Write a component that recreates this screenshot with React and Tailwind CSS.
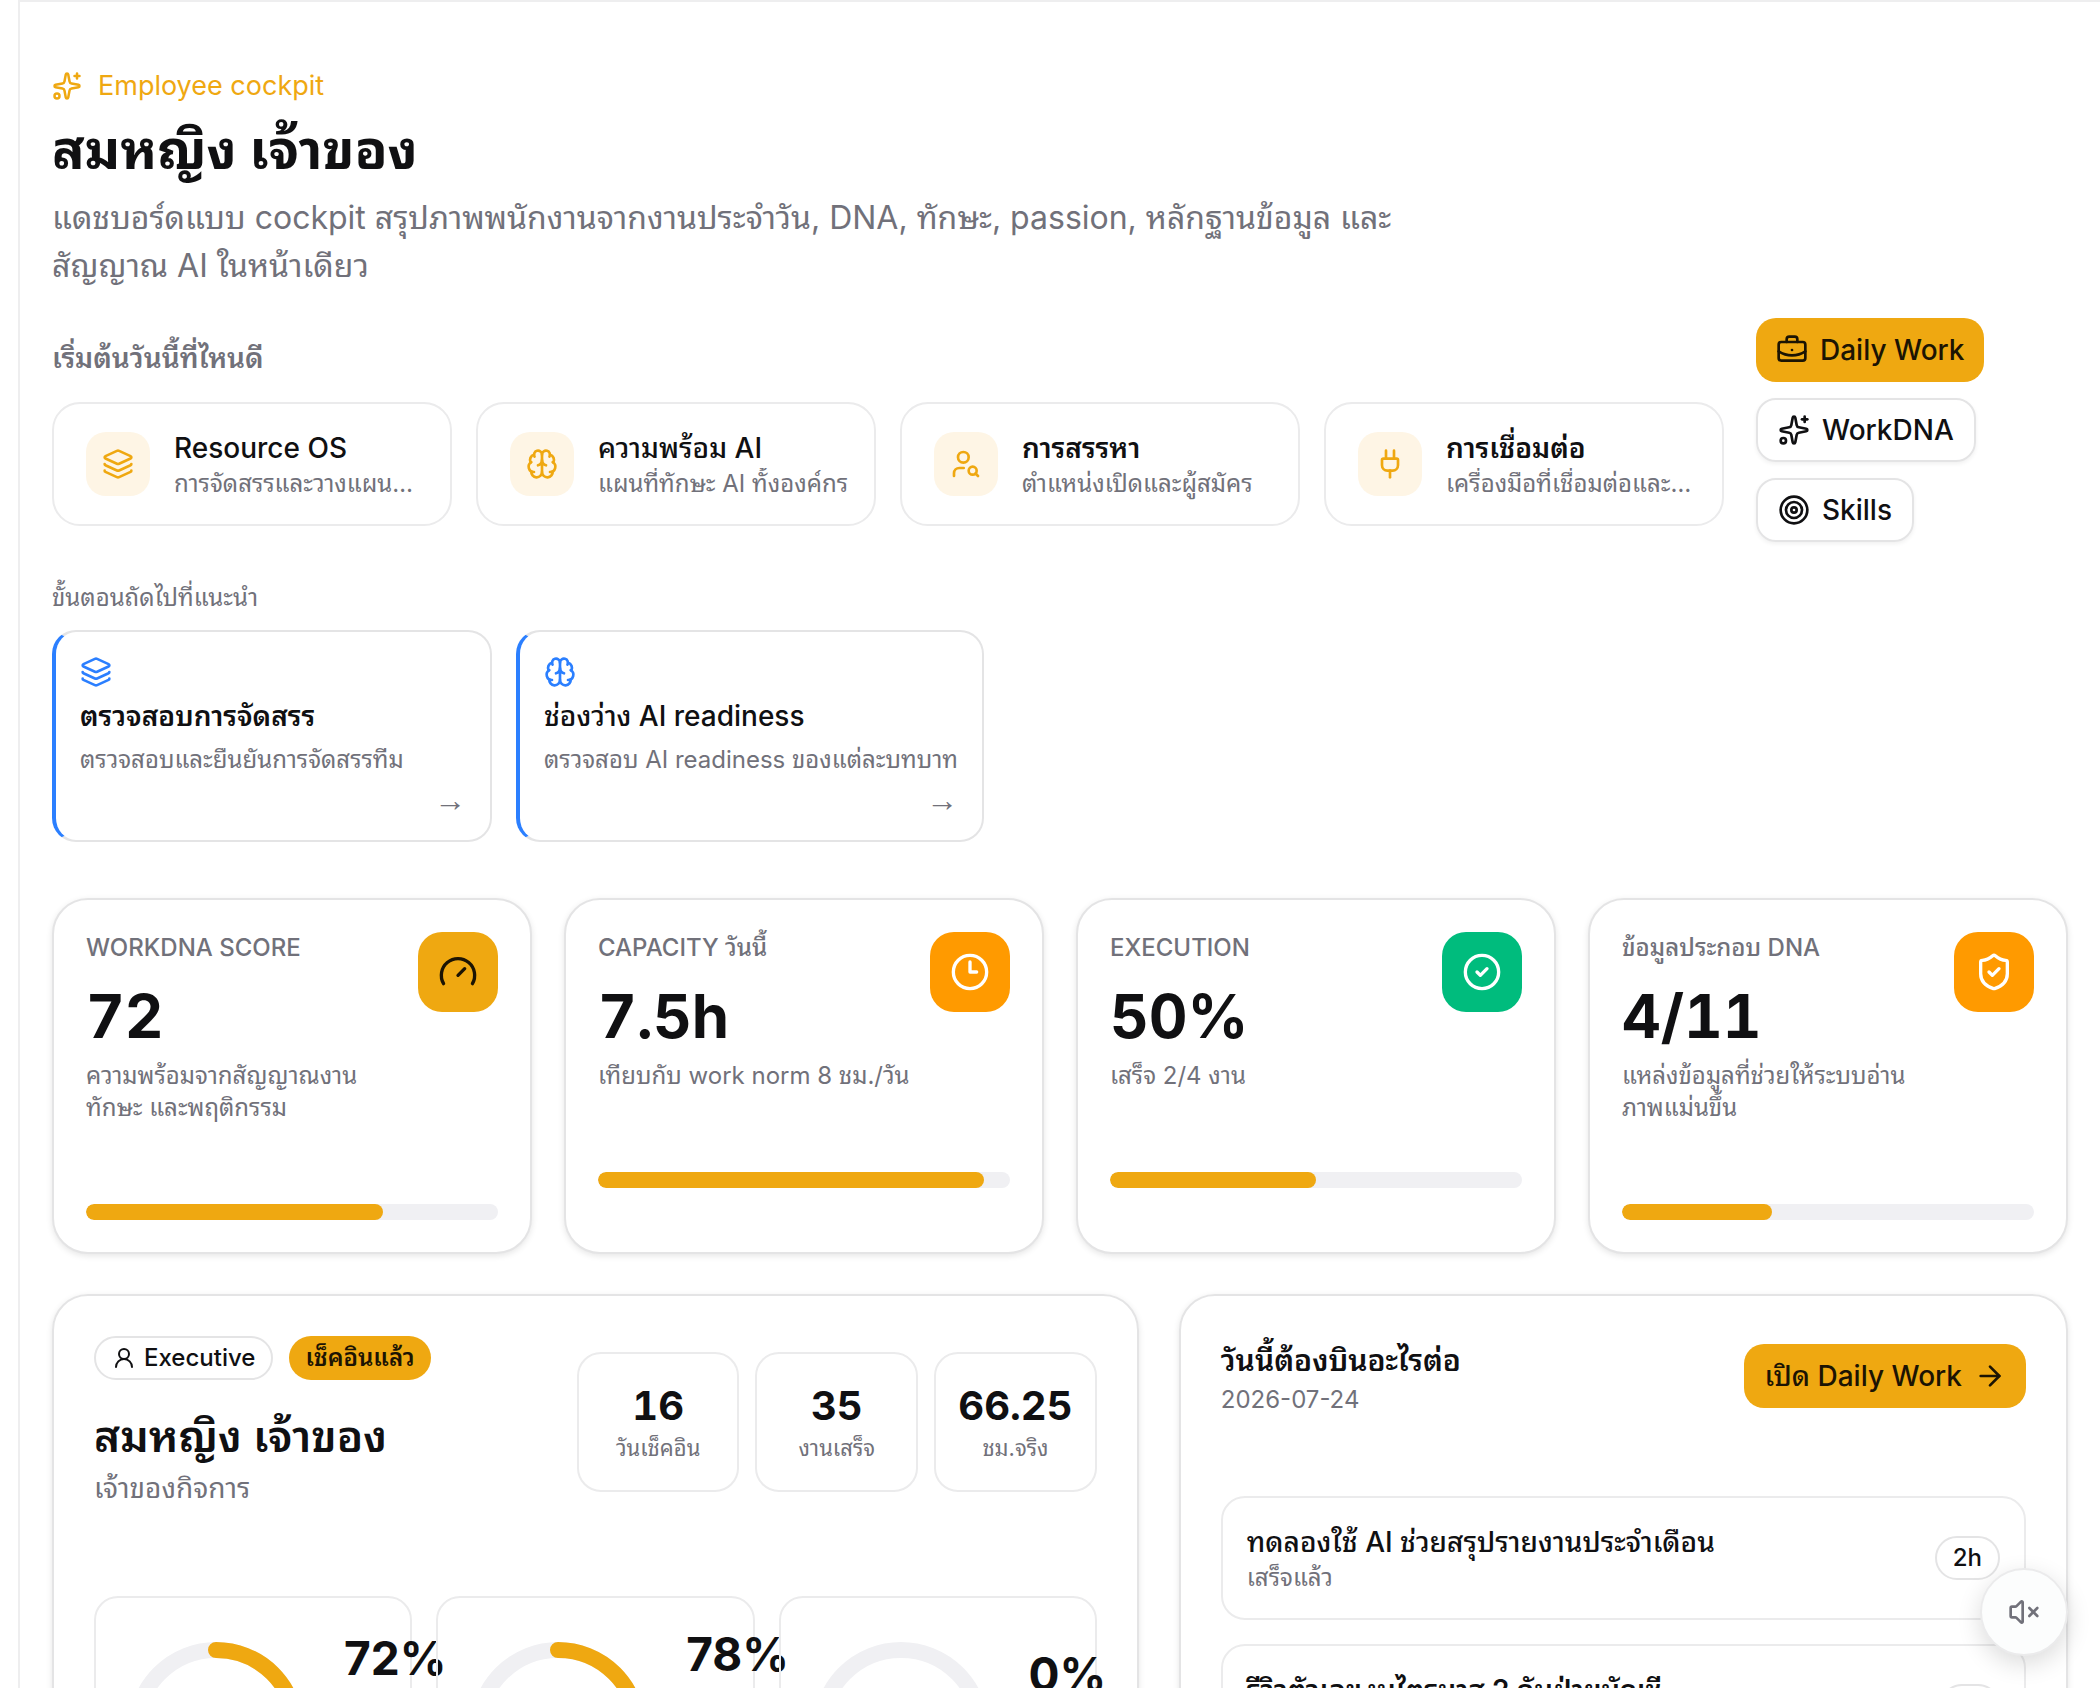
import React from "react";
import {
  ArrowRight, Brain, BriefcaseBusiness, CircleCheck, Clock3, Gauge, Layers, Plug,
  ShieldCheck, Sparkles, Target, UserRound, UserSearch, VolumeX,
} from "lucide-react";

const quickLinks = [
  { icon: Layers, title: "Resource OS", sub: "การจัดสรรและวางแผนกำลังคน" },
  { icon: Brain, title: "ความพร้อม AI", sub: "แผนที่ทักษะ AI ทั้งองค์กร" },
  { icon: UserSearch, title: "การสรรหา", sub: "ตำแหน่งเปิดและผู้สมัคร" },
  { icon: Plug, title: "การเชื่อมต่อ", sub: "เครื่องมือที่เชื่อมต่อและสถานะ" },
];

const nextSteps = [
  { icon: Layers, title: "ตรวจสอบการจัดสรร", sub: "ตรวจสอบและยืนยันการจัดสรรทีม" },
  { icon: Brain, title: "ช่องว่าง AI readiness", sub: "ตรวจสอบ AI readiness ของแต่ละบทบาท" },
];

const kpis = [
  { label: "WORKDNA SCORE", value: "72", lines: ["ความพร้อมจากสัญญาณงาน", "ทักษะ และพฤติกรรม"], pct: 72, icon: Gauge, tone: "bg-[#efa811] text-[#1c1403]" },
  { label: "CAPACITY วันนี้", value: "7.5h", lines: ["เทียบกับ work norm 8 ชม./วัน"], pct: 93.75, icon: Clock3, tone: "bg-[#ff9a00] text-white" },
  { label: "EXECUTION", value: "50%", lines: ["เสร็จ 2/4 งาน"], pct: 50, icon: CircleCheck, tone: "bg-[#00bc7d] text-white" },
  { label: "ข้อมูลประกอบ DNA", value: "4/11", lines: ["แหล่งข้อมูลที่ช่วยให้ระบบอ่าน", "ภาพแม่นขึ้น"], pct: 36.4, icon: ShieldCheck, tone: "bg-[#ff9a00] text-white" },
];

const stats = [
  { value: "16", label: "วันเช็คอิน" },
  { value: "35", label: "งานเสร็จ" },
  { value: "66.25", label: "ชม.จริง" },
];

const rings = [
  { pct: 72, offset: "mt-0" },
  { pct: 78, offset: "-mt-1" },
  { pct: 0, offset: "mt-4" },
];

const tasks = [
  { title: "ทดลองใช้ AI ช่วยสรุปรายงานประจำเดือน", status: "เสร็จแล้ว", hours: "2h" },
  { title: "รีวิวตัวเลขงบไตรมาส 2 กับฝ่ายบัญชี", status: "เสร็จแล้ว", hours: "1h" },
];

const titleWeight = (text) => (/[A-Za-z]/.test(text) ? "font-medium" : "font-semibold");

function Ring({ pct }) {
  const c = 2 * Math.PI * 80;
  return (
    <svg viewBox="0 0 192 192" className="size-48 shrink-0" fill="none" strokeWidth="16">
      <circle cx="96" cy="96" r="80" stroke="#f0f0f3" />
      {pct > 0 && (
        <circle
          cx="96" cy="96" r="80" stroke="#efa811" strokeLinecap="round"
          strokeDasharray={`${(c * pct) / 100} ${c}`} transform="rotate(-90 96 96)"
        />
      )}
    </svg>
  );
}

function KpiCard({ label, value, lines, pct, icon: Icon, tone }) {
  return (
    <div className="rounded-[36px] border-2 border-[#e4e4e5] bg-white p-8 shadow-[0_2px_6px_rgba(0,0,0,0.1)]">
      <div className="flex items-start justify-between gap-6">
        <div className="min-w-0">
          <div className="text-2xl leading-8 font-medium text-[#71717a]">{label}</div>
          <div className="mt-4 text-[60px] leading-[72px] font-bold tabular-nums">{value}</div>
          <div className="mt-2 text-2xl leading-8 text-[#71717a]">
            {lines.map((l) => <div key={l} className="whitespace-nowrap">{l}</div>)}
          </div>
        </div>
        <div className={`flex size-20 shrink-0 items-center justify-center rounded-3xl ${tone}`}>
          <Icon className="size-10" />
        </div>
      </div>
      <div className="mt-20 h-4 overflow-hidden rounded-full bg-[#f0f0f3]">
        <div className="h-full rounded-full bg-[#efa811]" style={{ width: `${pct}%` }} />
      </div>
    </div>
  );
}

export default function App() {
  return (
    <div className="h-screen overflow-hidden bg-white pl-[18px] font-['Inter','Noto_Sans_Thai_Looped',sans-serif] text-[#101012]">
      <main className="min-h-full border-t-2 border-l-2 border-[#eeeeef] pt-16 pr-8 pl-8">
        <header className="flex items-end gap-8">
          <div className="min-w-0 flex-1 pb-4">
            <div className="flex items-center gap-4 text-[27px] leading-10 text-[#efa811]">
              <Sparkles className="size-[30px]" /> Employee cockpit
            </div>
            <h1 className="mt-2 text-[54px] leading-[72px] font-bold">สมหญิง เจ้าของ</h1>
            <p className="mt-2 text-[32px] leading-[48px] text-[#71717a]">
              แดชบอร์ดแบบ cockpit สรุปภาพพนักงานจากงานประจำวัน, DNA, ทักษะ, passion, หลักฐานข้อมูล และ
              <br />สัญญาณ AI ในหน้าเดียว
            </p>
            <h2 className="mt-12 text-[28px] leading-10 font-semibold text-[#71717a]">เริ่มต้นวันนี้ที่ไหนดี</h2>
            <nav className="mt-6 grid grid-cols-4 gap-6">
              {quickLinks.map(({ icon: Icon, title, sub }) => (
                <a key={title} href="#" className="flex items-center gap-6 rounded-[28px] border-2 border-[#ebebec] py-6 pr-6 pl-8">
                  <span className="flex size-16 shrink-0 items-center justify-center rounded-[20px] bg-[#fef5e5] text-[#efa811]">
                    <Icon className="size-8" />
                  </span>
                  <span className="min-w-0">
                    <span className={`block text-[28px] leading-10 ${titleWeight(title)}`}>{title}</span>
                    <span className="block truncate text-2xl leading-8 text-[#71717a]">{sub}</span>
                  </span>
                </a>
              ))}
            </nav>
          </div>
          <div className="flex w-[312px] shrink-0 flex-col items-start gap-4 text-[28px] font-medium">
            <button className="flex h-16 items-center gap-3 rounded-[20px] bg-[#efa811] px-5 text-[#1c1403]">
              <BriefcaseBusiness className="size-8" /> Daily Work
            </button>
            <button className="flex h-16 items-center gap-3 rounded-[20px] border-2 border-[#e4e4e5] px-5 shadow-[0_2px_4px_rgba(0,0,0,0.06)]">
              <Sparkles className="size-8" /> WorkDNA
            </button>
            <button className="flex h-16 items-center gap-3 rounded-[20px] border-2 border-[#e4e4e5] px-5 shadow-[0_2px_4px_rgba(0,0,0,0.06)]">
              <Target className="size-8" /> Skills
            </button>
          </div>
        </header>

        <section className="mt-10">
          <h2 className="text-2xl leading-8 text-[#71717a]">ขั้นตอนถัดไปที่แนะนำ</h2>
          <div className="mt-4 flex gap-6">
            {nextSteps.map(({ icon: Icon, title, sub }) => (
              <a key={title} href="#" className="flex min-w-[440px] flex-col gap-2 rounded-3xl border-2 border-l-4 border-[#e4e4e5] border-l-[#2b7fff] p-6">
                <Icon className="size-8 text-[#2b7fff]" />
                <span className={`text-[28px] leading-10 ${titleWeight(title)}`}>{title}</span>
                <span className="text-2xl leading-8 text-[#71717a]">{sub}</span>
                <span className="self-end font-['Liberation_Sans',sans-serif] text-[32px] leading-8 text-[#71717a]">→</span>
              </a>
            ))}
          </div>
        </section>

        <section className="mt-14 grid grid-cols-4 gap-8">
          {kpis.map((k) => <KpiCard key={k.label} {...k} />)}
        </section>

        <section className="mt-10 grid grid-cols-[1.1fr_0.9fr] gap-10">
          <div className="rounded-[36px] border-2 border-[#e4e4e5] p-10 shadow-[0_2px_6px_rgba(0,0,0,0.1)]">
            <div className="flex items-center justify-between gap-8">
              <div>
                <div className="flex items-center gap-4 text-2xl font-medium">
                  <span className="flex h-11 items-center gap-2 rounded-full border-2 border-[#e4e4e5] px-4">
                    <UserRound className="size-6" /> Executive
                  </span>
                  <span className="flex h-11 items-center rounded-full bg-[#efa811] px-4 font-semibold text-[#1c1403]">เช็คอินแล้ว</span>
                </div>
                <h2 className="mt-6 text-[44px] leading-[64px] font-semibold">สมหญิง เจ้าของ</h2>
                <p className="text-[28px] leading-10 text-[#71717a]">เจ้าของกิจการ</p>
              </div>
              <div className="grid w-[520px] grid-cols-3 gap-4 text-center">
                {stats.map((s) => (
                  <div key={s.label} className="rounded-3xl border-2 border-[#ebebec] py-7">
                    <div className="text-[40px] leading-[48px] font-bold tabular-nums">{s.value}</div>
                    <div className="mt-1 text-[22px] leading-7 text-[#71717a]">{s.label}</div>
                  </div>
                ))}
              </div>
            </div>
            <div className="mt-[88px] grid grid-cols-3 gap-6">
              {rings.map((r) => (
                <div key={r.pct} className="flex min-w-0 items-start gap-8 rounded-3xl border-2 border-[#ebebec] px-6 py-9">
                  <Ring pct={r.pct} />
                  <div className={`w-0 text-[46px] leading-[48px] font-bold ${r.offset}`}>{r.pct}%</div>
                </div>
              ))}
            </div>
          </div>

          <div className="rounded-[36px] border-2 border-[#e4e4e5] p-10 shadow-[0_2px_6px_rgba(0,0,0,0.1)]">
            <div className="flex items-center justify-between">
              <div>
                <h2 className="text-[30px] leading-[48px] font-semibold">วันนี้ต้องบินอะไรต่อ</h2>
                <p className="text-2xl leading-8 text-[#71717a]">2026-07-24</p>
              </div>
              <button className="flex h-16 items-center gap-3 rounded-[20px] bg-[#efa811] px-5 text-[28px] font-medium text-[#1c1403]">
                เปิด Daily Work <ArrowRight className="size-8" />
              </button>
            </div>
            <div className="mt-20 flex flex-col gap-6">
              {tasks.map((t) => (
                <div key={t.title} className="flex items-center justify-between rounded-3xl border-2 border-[#ebebec] p-6">
                  <div>
                    <div className={`text-[28px] leading-10 ${titleWeight(t.title)}`}>{t.title}</div>
                    <div className="text-2xl leading-8 text-[#71717a]">{t.status}</div>
                  </div>
                  <span className="flex h-11 items-center rounded-full border-2 border-[#e4e4e5] px-4 text-2xl font-medium">{t.hours}</span>
                </div>
              ))}
            </div>
          </div>
        </section>
      </main>

      <button aria-label="Mute" className="fixed right-8 bottom-8 flex size-[88px] items-center justify-center rounded-full border-2 border-[#ebebec] bg-[#fcfdfd] text-[#71717a] shadow-[0_8px_24px_rgba(0,0,0,0.14)]">
        <VolumeX className="size-8" />
      </button>
    </div>
  );
}
